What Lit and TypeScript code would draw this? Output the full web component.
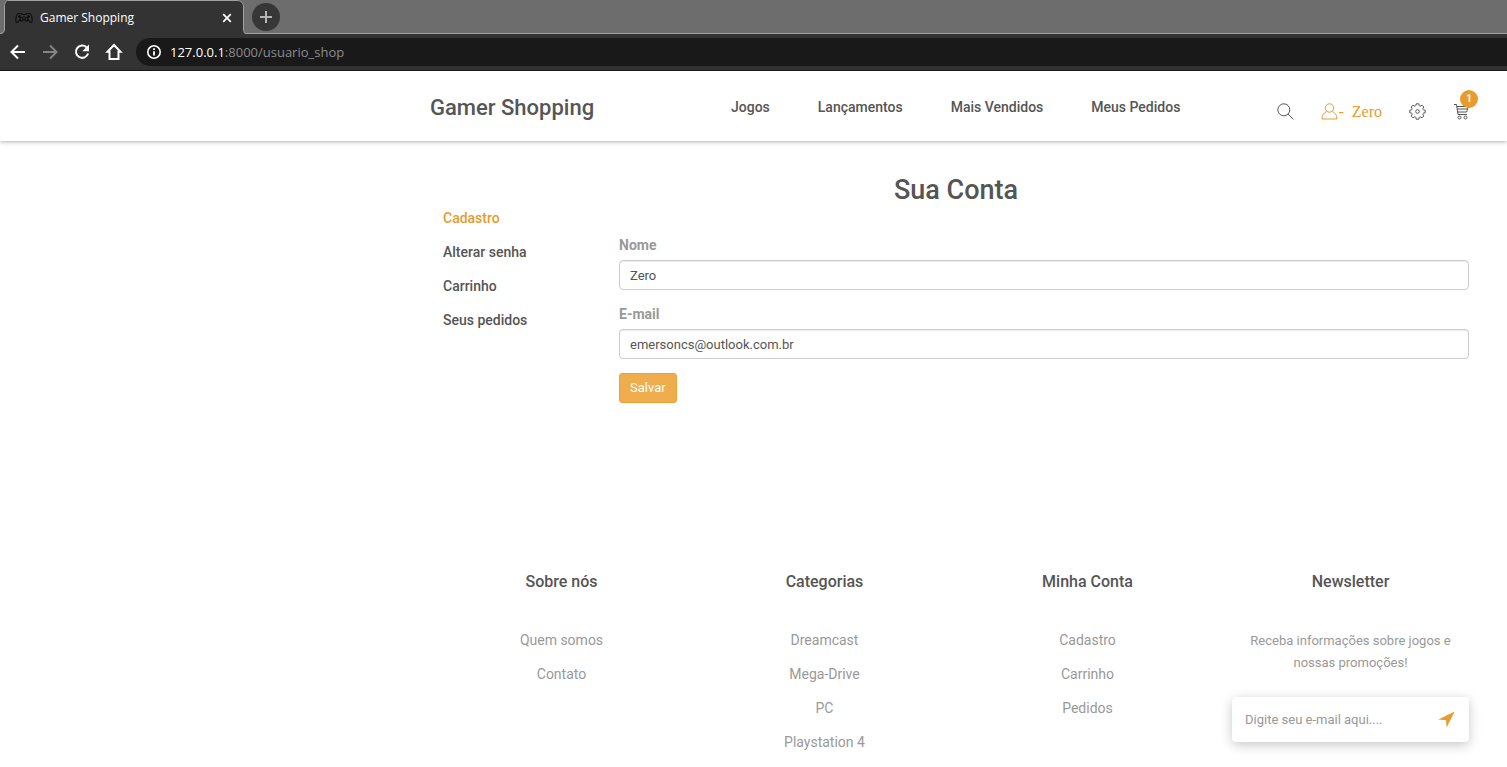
import { LitElement, html, svg, css } from "lit";
import { customElement } from "lit/decorators.js";

@customElement("browser-bar")
class BrowserBar extends LitElement {
  static styles = css`
    :host { display: block; font-family: "Open Sans", sans-serif; background: #333; border-bottom: 1px solid #1a1a1a; }
    .strip { display: flex; align-items: stretch; height: 34px; background: #6d6d6d; }
    .tab { box-sizing: border-box; flex: none; width: 229px; display: flex; align-items: center; gap: 6px; padding: 0 0 0 6px; color: #fff; font-size: 12px; background: #333; border-top: 1px solid #a0a0a0; }
    .start, .end { flex: none; width: 8px; height: 34px; }
    .title { flex: 1; line-height: 16px; }
    .rest { flex: 1; box-sizing: border-box; border-bottom: 1px solid #a0a0a0; display: flex; align-items: center; padding-left: 7px; }
    button { border: 0; padding: 0; margin: 0; background: none; color: #fff; display: grid; place-items: center; }
    .close { width: 20px; height: 20px; }
    .plus { width: 28px; height: 28px; border-radius: 50%; background: #373737; color: #b5b5b5; }
    .tools { display: flex; align-items: center; height: 36px; padding-left: 8px; gap: 12px; }
    .tools button { width: 20px; height: 20px; flex: none; }
    .tools .off { color: #858585; }
    .address { flex: 1; display: flex; align-items: center; gap: 8px; height: 28px; padding-left: 10px; border-radius: 14px 0 0 14px; background: #191919; color: #fff; }
    .address svg { flex: none; }
    .url { font-size: 13px; line-height: 20px; }
    .url span { color: #8c8c8c; }
    svg { display: block; }
  `;

  render() {
    return html`
      <div class="strip">
        <svg class="start" viewBox="0 0 8 34"><path d="M0 34C3 34 4.500 32 4.500 29V7C4.500 3 6 .5 8 .5V34Z" fill="#333"/><path d="M0 33.500C3 33.500 4.500 32 4.500 29V7C4.500 3 6 .5 8 .5" fill="none" stroke="#a0a0a0"/></svg>
        <div class="tab">
          <svg width="20" height="14" viewBox="0 0 20 14" fill="none" stroke="#111" stroke-width="1.200"><path d="M4 2.500h3l1 1h4l1-1h3c1.700 1 2.800 7 2 8.500-1.500 1.600-3-1-4-2.200-1 1.500-2.700 1.400-3.500-.3h-1C8.700 10.200 7 10.300 6 8.800 5 10 3.500 12.600 2 11 1.200 9.500 2.300 3.500 4 2.500Z"/><path d="M5.500 4v3M4 5.500h3M14.500 4v3M13 5.500h3M9 6h2"/><circle cx="7.500" cy="8" r="1.500"/><circle cx="12.500" cy="8" r="1.500"/></svg>
          <span class="title">Gamer Shopping</span>
          <button class="close" aria-label="Fechar guia"><svg width="10" height="10" viewBox="0 0 10 10" stroke="currentColor" stroke-width="1.700"><path d="M1.200 1.200l7.600 7.600M8.800 1.200L1.200 8.800"/></svg></button>
        </div>
        <svg class="end" viewBox="0 0 8 34"><path d="M8 34H0V.5C4 .5 6.500 3 6.500 7V29C6.500 32 7.500 33.500 8 34Z" fill="#333"/><path d="M0 .5C4 .5 6.500 3 6.500 7V29C6.500 31 7 32.500 8 33.500" fill="none" stroke="#a0a0a0"/></svg>
        <div class="rest"><button class="plus" aria-label="Nova guia"><svg width="14" height="14" viewBox="0 0 14 14" stroke="currentColor" stroke-width="2"><path d="M1 7h12M7 1v12"/></svg></button></div>
      </div>
      <div class="tools">
        <button aria-label="Voltar"><svg width="20" height="20" viewBox="0 0 20 20" fill="none" stroke="currentColor" stroke-width="2"><path d="M17 10H4M10 3.500L3.500 10l6.500 6.500"/></svg></button>
        <button class="off" aria-label="Avançar"><svg width="20" height="20" viewBox="0 0 20 20" fill="none" stroke="currentColor" stroke-width="2"><path d="M3 10h13M10 3.500l6.500 6.500-6.500 6.500"/></svg></button>
        <button aria-label="Recarregar"><svg width="20" height="20" viewBox="0 0 20 20"><path d="M14.500 5.200A6.200 6.200 0 1 0 16.100 11.500" fill="none" stroke="currentColor" stroke-width="2"/><path d="M17 2.500V9.200h-6.700Z" fill="currentColor"/></svg></button>
        <button aria-label="Página inicial"><svg width="20" height="20" viewBox="0 0 20 20" fill="none" stroke="currentColor" stroke-width="2"><path d="M10 3L3.500 9.800H5.500V17h9V9.800h2Z"/></svg></button>
        <div class="address">
          <svg width="16" height="16" viewBox="0 0 16 16" fill="none" stroke="currentColor"><circle cx="8" cy="8" r="6.200" stroke-width="1.600"/><path d="M8 7.200v4.300M8 4.200v1.700" stroke-width="1.800"/></svg>
          <div class="url">127.0.0.1<span>:8000/usuario_shop</span></div>
        </div>
      </div>`;
  }
}

const teeth = Array.from({ length: 8 }, (_, i) => {
  const at = (r: number, deg: number) => {
    const a = ((i * 45 + deg) * Math.PI) / 180;
    return `${(8.5 + r * Math.cos(a)).toFixed(2)} ${(8.5 + r * Math.sin(a)).toFixed(2)}`;
  };
  return `${i ? "L" : "M"}${at(7.8, -10)}L${at(7.8, 10)}Q${at(4, 22.5)} ${at(7.8, 35)}`;
}).join("") + "Z";

const gear = svg`<path d=${teeth}/><circle cx="8.500" cy="8.500" r="1.800"/>`;

@customElement("shop-header")
class ShopHeader extends LitElement {
  static styles = css`
    :host { display: block; font-family: Roboto, sans-serif; box-shadow: 0 1px 4px rgba(0, 0, 0, .3); background: #fff; }
    header { display: grid; grid-template-columns: 301px 1fr auto; align-items: center; height: 70px; padding: 0 37px 0 430px; }
    a { color: #555; text-decoration: none; }
    .logo { font-size: 22px; line-height: 30px; font-weight: 500; padding-top: 3px; }
    nav { display: flex; gap: 48px; font-size: 14px; line-height: 20px; font-weight: 500; padding-top: 2px; }
    .actions { display: flex; align-items: center; padding-top: 10px; gap: 27px; }
    button { border: 0; padding: 0; margin: 0; background: none; color: #555; }
    svg { display: block; fill: none; stroke: currentColor; stroke-width: 1; }
    .user { display: flex; align-items: center; color: #e79c2d; font: 16px/20px "Liberation Serif", serif; white-space: pre; }
    .user span { padding-top: 2px; }
    .cart { position: relative; }
    .badge { position: absolute; left: 7px; top: -13px; width: 18px; height: 18px; border-radius: 50%; background: #e79c2d; color: #fff; font: 700 10px/18px Roboto, sans-serif; text-align: center; }
  `;

  render() {
    return html`
      <header>
        <a class="logo" href="#">Gamer Shopping</a>
        <nav>
          <a href="#">Jogos</a><a href="#">Lançamentos</a><a href="#">Mais Vendidos</a><a href="#">Meus Pedidos</a>
        </nav>
        <div class="actions">
          <button aria-label="Buscar"><svg width="17" height="17" viewBox="0 0 17 17"><circle cx="6.800" cy="6.800" r="6"/><path d="M11 11l5.300 5.300"/></svg></button>
          <a class="user" href="#"><svg width="17" height="17" viewBox="0 0 17 17"><circle cx="8.500" cy="5" r="4.200"/><path d="M5.700 8.500C3 9.800 1 12 1 16h15c0-4-2-6.200-4.700-7.500"/></svg><span>-  Zero</span></a>
          <button aria-label="Configurações"><svg width="17" height="17" viewBox="0 0 17 17">${gear}</svg></button>
          <button class="cart" aria-label="Carrinho"><svg width="17" height="17" viewBox="0 0 17 17"><path d="M1 1.500h2.500L5 11.500h9M3.700 3.500h11.500l-1.500 5.500H4.500M4 6h10.500"/><circle cx="6.500" cy="14.500" r="1.500"/><circle cx="12.500" cy="14.500" r="1.500"/></svg><span class="badge">1</span></button>
        </div>
      </header>`;
  }
}

const columns = [
  { title: "Sobre nós", links: ["Quem somos", "Contato"] },
  { title: "Categorias", links: ["Dreamcast", "Mega-Drive", "PC", "Playstation 4"] },
  { title: "Minha Conta", links: ["Cadastro", "Carrinho", "Pedidos"] },
];

@customElement("shop-footer")
class ShopFooter extends LitElement {
  static styles = css`
    :host { display: block; font-family: Roboto, sans-serif; color: #999; text-align: center; }
    footer { display: grid; grid-template-columns: repeat(4, 1fr); padding: 0 25px 0 430px; }
    h2 { margin: 0 0 31px; font-size: 16px; line-height: 20px; font-weight: 500; color: #555; }
    ul { list-style: none; margin: 0; padding: 0; }
    li { font-size: 14px; line-height: 34px; }
    a { color: #999; text-decoration: none; }
    .news { padding: 0 13px; }
    p { margin: 38px 0 23px; font-size: 13px; line-height: 22px; }
    form { display: flex; align-items: center; height: 45px; padding: 0 14px 0 13px; border-radius: 4px; background: #fff; box-shadow: 0 3px 12px rgba(0, 0, 0, .22); }
    input { flex: 1; min-width: 0; border: 0; padding: 0; outline: 0; background: none; font: 13px/20px Roboto, sans-serif; color: #555; }
    input::placeholder { color: #999; opacity: 1; }
    button { border: 0; padding: 0; background: none; color: #e79c2d; }
    svg { display: block; }
  `;

  render() {
    return html`
      <footer>
        ${columns.map((c) => html`<section><h2>${c.title}</h2><ul>${c.links.map((l) => html`<li><a href="#">${l}</a></li>`)}</ul></section>`)}
        <section class="news">
          <h2>Newsletter</h2>
          <p>Receba informações sobre jogos e nossas promoções!</p>
          <form>
            <input type="email" aria-label="E-mail" placeholder="Digite seu e-mail aqui....">
            <button type="button" aria-label="Enviar"><svg width="17" height="17" viewBox="0 0 17 17" fill="currentColor"><path d="M16.700 .5L8.600 16.500 8 9.200.3 8.500Z"/></svg></button>
          </form>
        </section>
      </footer>`;
  }
}

@customElement("app-root")
class AppRoot extends LitElement {
  static styles = css`
    :host { display: flex; flex-direction: column; font-family: Roboto, sans-serif; background: #fff; color: #555; }
    main { padding: 34px 25px 169px 430px; }
    h1 { margin: 0; font-size: 27px; line-height: 30px; font-weight: 500; text-align: center; }
    .account { display: grid; grid-template-columns: 176px 1fr; align-items: start; padding: 0 13px; }
    .menu { display: flex; flex-direction: column; margin-top: -4px; font-size: 14px; line-height: 34px; font-weight: 500; }
    .menu a { color: #555; text-decoration: none; }
    .menu .current { color: #e79c2d; }
    form { display: flex; flex-direction: column; padding-top: 30px; }
    label { font-size: 14px; line-height: 20px; font-weight: 700; color: #999; margin-bottom: 5px; }
    input { box-sizing: border-box; width: 100%; height: 30px; margin: 0 0 14px; padding: 0 10px; border: 1px solid #ccc; border-radius: 4px; font: 13px/18px Roboto, sans-serif; color: #555; background: #fff; box-shadow: inset 0 1px 1px rgba(0, 0, 0, .075); }
    button { align-self: flex-start; height: 30px; padding: 0 10px; border: 1px solid #eea236; border-radius: 3px; background: #f0ad4e; color: #fff; font: 13px/18px Roboto, sans-serif; }
  `;

  render() {
    return html`
      <browser-bar></browser-bar>
      <shop-header></shop-header>
      <main>
        <h1>Sua Conta</h1>
        <div class="account">
          <nav class="menu">
            <a class="current" href="#">Cadastro</a><a href="#">Alterar senha</a><a href="#">Carrinho</a><a href="#">Seus pedidos</a>
          </nav>
          <form>
            <label for="nome">Nome</label>
            <input id="nome" type="text" .value=${"Zero"}>
            <label for="email">E-mail</label>
            <input id="email" type="email" .value=${"emersoncs@outlook.com.br"}>
            <button type="button">Salvar</button>
          </form>
        </div>
      </main>
      <shop-footer></shop-footer>`;
  }
}
